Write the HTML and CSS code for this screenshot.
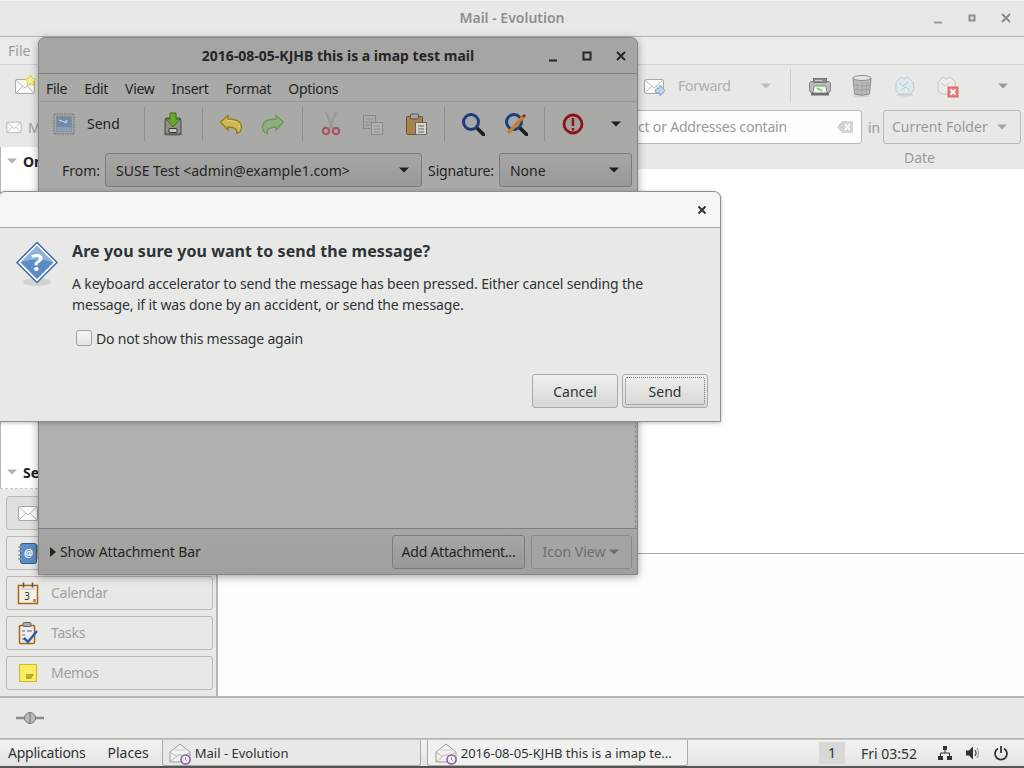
FILE: index.html
```html
<!DOCTYPE html>
<html lang="en">
<head>
<meta charset="utf-8">
<title>Mail - Evolution</title>
<link rel="stylesheet" href="styles.css">
</head>
<body>
<div class="desktop">
  <svg class="sprites" width="0" height="0" aria-hidden="true">
    <defs>
      <symbol id="arrow" viewBox="0 0 12 12"><path d="M1 3.500h10L6 8.500z"/></symbol>
      <symbol id="env" viewBox="0 0 24 24"><rect x="2.500" y="5.500" width="19" height="14" rx="1" fill="#f9f9f7" stroke="#a8a8a5"/><path d="M3 6l9 8 9-8M3 19l7-7M21 19l-7-7" fill="none" stroke="#bdbdba"/></symbol>
      <symbol id="mailclock" viewBox="0 0 24 24"><path d="M2 11L12 3l10 8v10H2z" fill="#f1f1f0" stroke="#9a9a98"/><path d="M2 21l8-7h4l8 7M2 11l7 5M22 11l-7 5" fill="none" stroke="#b5b5b3"/><path d="M6 9h12" stroke="#ccc"/><circle cx="17.500" cy="18.500" r="4.500" fill="#f3f0f5" stroke="#8d5a9e" stroke-width="1.500"/><path d="M17.500 16.500v2l1 1" fill="none" stroke="#777"/></symbol>
    </defs>
  </svg>

  <section class="window main">
    <header class="titlebar main-title">
      <span class="title-text">Mail - Evolution</span>
      <span class="wm-buttons">
        <svg width="12" height="12" viewBox="0 0 12 12"><path d="M2 10.500h8" stroke="#9b9b98" stroke-width="2"/></svg>
        <svg width="12" height="12" viewBox="0 0 12 12"><rect x="3.500" y="3.500" width="5" height="5" fill="none" stroke="#8c8c89" stroke-width="2"/></svg>
        <svg width="12" height="12" viewBox="0 0 12 12"><path d="M2 2l8 8M10 2l-8 8" stroke="#8c8c89" stroke-width="2"/></svg>
      </span>
    </header>
    <nav class="menubar main-menu"><span>File</span></nav>
    <div class="toolbar main-tools">
      <svg class="new-icon" width="24" height="24" viewBox="0 0 24 24"><use href="#env"/><path d="M17.500 1l1.900 3.500 3.800.6-2.800 2.700.7 3.800-3.600-1.800-3.600 1.800.7-3.800-2.800-2.700 3.800-.6z" fill="#faf08c" stroke="#dccd55"/></svg>
      <span class="grow"></span>
      <svg width="24" height="24" viewBox="0 0 24 24"><use href="#env"/><path d="M13 18c0-3 2-4 5-4v-3l5 5.500-5 5.500v-3c-2 0-4-.5-5-1z" fill="#bdd3ea" stroke="#82a5cc"/></svg>
      <span class="forward-label">Forward</span>
      <svg class="tool-arrow pale" width="12" height="12"><use href="#arrow"/></svg>
      <span class="vsep pale-sep"></span>
      <span class="tb-btn"><svg width="24" height="24" viewBox="0 0 24 24"><rect x="1.500" y="7.500" width="21" height="11" rx="2.500" fill="#bcbcba" stroke="#7f7f7c"/><rect x="5.500" y="4.500" width="13" height="4" fill="#8f8f8c" stroke="#777"/><path d="M7 6.500h7" stroke="#ccc"/><path d="M6 12h12l1 7H5z" fill="#eef4ea" stroke="#888"/><path d="M9 14l5 3" stroke="#8fc08a" stroke-width="1.500"/><rect x="3" y="19" width="18" height="2.500" fill="#6e6e6b"/></svg></span>
      <span class="tb-btn"><svg width="24" height="24" viewBox="0 0 24 24"><ellipse cx="12" cy="22" rx="9" ry="1.500" fill="#d3d3d1"/><path d="M3 4l1.500 16q7.500 2.500 15 0L21 4" fill="#b9b9b7" stroke="#8f8f8c"/><path d="M7 8l1 12M12 8v13M17 8l-1 12M4 11q8 2.500 16 0M4.500 15q7.500 2.500 15 0" fill="none" stroke="#969694" stroke-width=".7"/><ellipse cx="12" cy="4" rx="9" ry="2.500" fill="#e2e2e0" stroke="#8f8f8c"/></svg></span>
      <span class="tb-btn"><svg width="24" height="24" viewBox="0 0 24 24"><ellipse cx="12" cy="21" rx="9" ry="1.500" fill="#d0d0ce"/><path d="M3 8l5-5 3 2 4-2 5 5 1 7-3 5H7l-4-3z" fill="#dfeaef" stroke="#bfcbd1"/><path d="M6 9l4 3 5-4M8 16l5-3 4 4" fill="none" stroke="#b4c9d3"/></svg></span>
      <span class="tb-btn"><svg width="24" height="24" viewBox="0 0 24 24"><path d="M3 8l5-5 3 2 4-2 5 5 1 7-3 5H7l-4-3z" fill="#ececeb" stroke="#c4c4c2"/><path d="M6 9l4 3 5-4" fill="none" stroke="#c9c9c7"/><rect x="13" y="13" width="10" height="10" fill="#e57b7b" stroke="#d66"/><path d="M15.500 15.500l5 5M20.500 15.500l-5 5" stroke="#fff" stroke-width="1.800"/></svg></span>
      <svg class="tool-arrow dim" width="12" height="12"><use href="#arrow"/></svg>
    </div>
    <div class="searchbar">
      <svg class="show-env" width="18" height="18" viewBox="0 0 24 24"><use href="#env"/></svg>
      <span class="show-label">M</span>
      <span class="grow"></span>
      <div class="search-entry"><span>Subject or Addresses contain</span>
        <svg width="16" height="12" viewBox="0 0 16 12"><path d="M5 0h11v12H5L0 6z" fill="#d3d3d1"/><path d="M8 3l5 6M13 3l-5 6" stroke="#fff" stroke-width="1.500"/></svg>
      </div>
      <span class="in-label">in</span>
      <div class="scope-combo"><span>Current Folder</span><svg width="12" height="12"><use href="#arrow"/></svg></div>
    </div>
    <div class="workspace">
      <aside class="sidebar">
        <div class="tree">
          <div class="tree-row"><svg width="12" height="12"><use href="#arrow"/></svg><b>On</b></div>
          <div class="tree-row"><svg width="12" height="12"><use href="#arrow"/></svg><b>Se</b></div>
        </div>
        <div class="switcher">
          <div class="switch active"><svg width="24" height="24" viewBox="0 0 24 24"><use href="#env"/></svg></div>
          <div class="switch"><svg width="24" height="24" viewBox="0 0 24 24"><rect x="19" y="4" width="4" height="7" fill="#7ab648"/><rect x="19" y="11" width="4" height="7" fill="#e6a32e"/><rect x="4.500" y="2.500" width="16" height="20" rx="2" fill="#5b8cc6" stroke="#2f5d97"/><text x="12.500" y="16" class="at-sign">@</text><path d="M2 6h4M2 10h4M2 14h4M2 18h4" stroke="#999" stroke-width="1.500"/></svg></div>
          <div class="switch"><svg width="24" height="24" viewBox="0 0 24 24"><rect x="2.500" y="4.500" width="19" height="18" fill="#f3f0e6" stroke="#a9660e" stroke-width="1.500"/><path d="M5 8h14" stroke="#bbb"/><path d="M7.500 1.500v5M16.500 1.500v5" stroke="#555" stroke-width="1.500"/><text x="11" y="19" class="cal-num">3</text><rect x="17" y="18" width="3" height="3" fill="#999"/></svg><span>Calendar</span></div>
          <div class="switch"><svg width="24" height="24" viewBox="0 0 24 24"><rect x="3.500" y="4.500" width="15" height="18" rx="1" fill="#eee" stroke="#a9660e" stroke-width="1.500"/><rect x="7" y="1.500" width="8" height="4" rx="1" fill="#aaa" stroke="#666"/><path d="M6 10h3M6 14h3M6 18h3M11 10h5" stroke="#666"/><path d="M8 17l4 4 9-11" fill="none" stroke="#2a5da8" stroke-width="2.500"/></svg><span>Tasks</span></div>
          <div class="switch"><svg width="24" height="24" viewBox="0 0 24 24"><rect x="3.500" y="3.500" width="17" height="17" fill="#f8ee66" stroke="#cdbb1c"/><path d="M10 18v-5h8l-3 5z" fill="#bba92c"/></svg><span>Memos</span></div>
        </div>
      </aside>
      <div class="content">
        <div class="column-head"><span>Date</span></div>
        <div class="message-list"></div>
        <div class="preview"></div>
      </div>
    </div>
    <footer class="statusbar">
      <svg width="28" height="14" viewBox="0 0 28 14"><path d="M0 7h28" stroke="#8d8d8a" stroke-width="2.500"/><circle cx="14" cy="7" r="5.500" fill="#b9b9b6" stroke="#777"/><path d="M14 1.500v11" stroke="#777"/></svg>
    </footer>
  </section>

  <section class="window composer">
    <header class="titlebar comp-title">
      <span class="title-text">2016-08-05-KJHB this is a imap test mail</span>
      <span class="wm-buttons dark">
        <svg width="12" height="12" viewBox="0 0 12 12"><path d="M2 10.500h8" stroke="#262626" stroke-width="2"/></svg>
        <svg width="12" height="12" viewBox="0 0 12 12"><rect x="2.500" y="2.500" width="7" height="7" fill="none" stroke="#262626" stroke-width="2"/></svg>
        <svg width="12" height="12" viewBox="0 0 12 12"><path d="M2 2l8 8M10 2l-8 8" stroke="#262626" stroke-width="2"/></svg>
      </span>
    </header>
    <nav class="menubar comp-menu"><span>File</span><span>Edit</span><span>View</span><span>Insert</span><span>Format</span><span>Options</span></nav>
    <div class="toolbar comp-tools">
      <div class="send-btn">
        <svg width="22" height="22" viewBox="0 0 22 22"><rect x="1" y="1" width="20" height="20" fill="#a4a4a3" stroke="#6f6f6e" stroke-dasharray="1.500 1"/><rect x="3.500" y="3.500" width="15" height="15" fill="#6f8ba6" stroke="#7f8f9c"/><path d="M6 7l8 3M12 8l3 0" stroke="#d7dde2"/><rect x="3.500" y="14" width="15" height="4.500" fill="#88a0b6"/></svg>
        <span>Send</span>
      </div>
      <span class="vsep"></span>
      <span class="tb-btn"><svg width="24" height="24" viewBox="0 0 24 24"><ellipse cx="12" cy="22.500" rx="10" ry="1.500" fill="#7d7d7c"/><path d="M5 6h14l1 3v13H4V9z" fill="#8f8f8c" stroke="#444"/><rect x="8" y="16.500" width="8" height="4" rx="1" fill="#c5c5c3" stroke="#333"/><path d="M9 1h6v6h4l-7 8-7-8h4z" fill="#6aa631" stroke="#3d701a"/></svg></span>
      <span class="vsep"></span>
      <span class="tb-btn"><svg width="24" height="24" viewBox="0 0 24 24"><path d="M1.500 10L9 3.500V7c9 0 13.500 3 13.500 8.500 0 3-1.500 5-5 6 1.500-4-2-6.500-8.500-6.500v3z" fill="#cdb957" stroke="#947e14" stroke-width="1.300"/><path d="M8 8.500c8 0 12 2.500 12.500 6.500" fill="none" stroke="#ded582"/></svg></span>
      <span class="tb-btn"><svg width="24" height="24" viewBox="0 0 24 24"><path d="M22.500 10L15 3.500V7C6 7 1.500 10 1.500 15.500c0 3 1.500 5 5 6-1.500-4 2-6.500 8.500-6.500v3z" fill="#8fb07c" stroke="#6c9455" stroke-width="1.300"/></svg></span>
      <span class="vsep"></span>
      <span class="tb-btn"><svg width="24" height="24" viewBox="0 0 24 24"><path d="M7 0l6.500 16M17 0l-6.500 16" stroke="#999997" stroke-width="2.200"/><circle cx="7" cy="19" r="3.200" fill="none" stroke="#a85560" stroke-width="2.200"/><circle cx="17" cy="19" r="3.200" fill="none" stroke="#a85560" stroke-width="2.200"/></svg></span>
      <span class="tb-btn"><svg width="24" height="24" viewBox="0 0 24 24"><rect x="2.500" y="3.500" width="12" height="13" fill="#a9a9a8" stroke="#8a8a87"/><path d="M5 7h7M5 10h7M5 13h4" stroke="#8f8f8d"/><rect x="10.500" y="10.500" width="11" height="12" fill="#b2b2b1" stroke="#8a8a87"/><path d="M13 14h6M13 17h6M13 20h6" stroke="#8f8f8d"/></svg></span>
      <span class="tb-btn"><svg width="24" height="24" viewBox="0 0 24 24"><rect x="2.500" y="4.500" width="16" height="18" rx="1" fill="#a8834a" stroke="#6e5020"/><rect x="6.500" y="2" width="8" height="5" rx="1" fill="#a3a3a2" stroke="#555"/><rect x="11.500" y="10.500" width="11" height="12" fill="#d4d4d3" stroke="#666"/><path d="M14 14h6M14 17h6M14 20h6" stroke="#666"/></svg></span>
      <span class="vsep"></span>
      <span class="tb-btn"><svg width="24" height="24" viewBox="0 0 24 24"><path d="M15 15l7.500 7.500" stroke="#1f1f1f" stroke-width="3.800" stroke-linecap="round"/><circle cx="10" cy="10" r="7.500" fill="#a4a9ad" stroke="#1f3d7a" stroke-width="3"/></svg></span>
      <span class="tb-btn"><svg width="24" height="24" viewBox="0 0 24 24"><path d="M15 15l7.500 7.500" stroke="#1f1f1f" stroke-width="3.800" stroke-linecap="round"/><circle cx="10" cy="10" r="7.500" fill="#a4a9ad" stroke="#1f3d7a" stroke-width="3"/><path d="M4 21L20 4" stroke="#c9802a" stroke-width="3.500"/><path d="M19 3l2 2" stroke="#a3222b" stroke-width="3"/></svg></span>
      <span class="vsep"></span>
      <span class="tb-btn"><svg width="24" height="24" viewBox="0 0 24 24"><circle cx="12" cy="12" r="9" fill="#a5a09f" stroke="#8d1414" stroke-width="2.800"/><path d="M12 6v8M12 16v2.500" stroke="#8d1414" stroke-width="2.500"/></svg></span>
      <span class="tb-btn"><svg class="tool-arrow ink" width="12" height="12"><use href="#arrow"/></svg></span>
    </div>
    <div class="from-row">
      <label>From:</label>
      <div class="combo from-combo"><span>SUSE Test &lt;admin@example1.com&gt;</span><svg width="12" height="12"><use href="#arrow"/></svg></div>
      <label class="sig-label">Signature:</label>
      <div class="combo sig-combo"><span>None</span><svg width="12" height="12"><use href="#arrow"/></svg></div>
    </div>
    <div class="editor"></div>
    <footer class="attach-bar">
      <svg class="expander" width="6" height="10" viewBox="0 0 6 10"><path d="M0 0l6 5-6 5z"/></svg>
      <span class="attach-label">Show Attachment Bar</span>
      <button class="attach-btn add-btn">Add Attachment...</button>
      <button class="attach-btn view-btn">Icon View<svg width="12" height="12"><use href="#arrow"/></svg></button>
    </footer>
  </section>

  <section class="window dialog">
    <header class="dialog-head">
      <svg width="12" height="12" viewBox="0 0 12 12"><path d="M2.500 2.500l7 7M9.500 2.500l-7 7" stroke="#2e3436" stroke-width="2"/></svg>
    </header>
    <div class="dialog-body">
      <svg class="q-icon" width="44" height="48" viewBox="0 0 44 48"><ellipse cx="22" cy="41" rx="14" ry="4" fill="#d2d2d0"/><path d="M22 1.500l20 20-20 20-20-20z" fill="#fff" stroke="#3a6ca8" stroke-width="1.500" stroke-linejoin="round"/><path d="M22 5l16.500 16.500L22 38 5.500 21.500z" fill="#5b8cc4"/><path d="M5.500 21.500L22 5l16.500 16.500q-16.500-6-33 0z" fill="#8fb2da"/><text x="22" y="30" class="q-mark">?</text></svg>
      <div class="dialog-text">
        <h1>Are you sure you want to send the message?</h1>
        <p>A keyboard accelerator to send the message has been pressed. Either cancel sending the message, if it was done by an accident, or send the message.</p>
        <label class="check-row"><span class="checkbox"></span>Do not show this message again</label>
      </div>
    </div>
    <div class="dialog-actions">
      <button class="dlg-btn">Cancel</button>
      <button class="dlg-btn default"><span>Send</span></button>
    </div>
  </section>

  <footer class="panel">
    <span class="panel-menu apps">Applications</span>
    <span class="panel-menu">Places</span>
    <div class="task task-main"><svg width="24" height="24" viewBox="0 0 24 24"><use href="#mailclock"/></svg><span>Mail - Evolution</span></div>
    <div class="task task-comp"><svg width="24" height="24" viewBox="0 0 24 24"><use href="#mailclock"/></svg><span>2016-08-05-KJHB this is a imap te...</span></div>
    <span class="grow"></span>
    <span class="workspace-num">1</span>
    <span class="clock">Fri 03:52</span>
    <span class="tray">
      <svg width="16" height="16" viewBox="0 0 16 16"><path d="M6 1h4v4H6zM1 11h5v4H1zM10 11h5v4h-5z" fill="#2e3436"/><path d="M8 5v3M3.500 11V8h9v3" fill="none" stroke="#2e3436"/></svg>
      <svg width="16" height="16" viewBox="0 0 16 16"><path d="M1 5.500h3l4-4v13l-4-4H1z" fill="#2e3436"/><path d="M10 5q2 3 0 6" fill="none" stroke="#555" stroke-width="1.300"/><path d="M12 3q3 5 0 10" fill="none" stroke="#aaa" stroke-width="1.300"/></svg>
      <svg width="16" height="16" viewBox="0 0 16 16"><path d="M5 3.500a6 6 0 1 0 6 0" fill="none" stroke="#2e3436" stroke-width="1.800"/><path d="M8 1v7" stroke="#2e3436" stroke-width="1.800"/></svg>
    </span>
  </footer>
</div>
</body>
</html>
```
FILE: styles.css
```css
* { box-sizing: border-box; }
html, body { margin: 0; padding: 0; }
body { font-family: "Noto Sans", "Open Sans", sans-serif; font-size: 14px; color: #2e3436; }
.sprites { position: absolute; }
svg { flex: none; display: block; }
.desktop { position: relative; width: 1024px; height: 768px; overflow: hidden; background: #e8e8e7; }
.grow { flex: 1; }

.window { position: absolute; display: flex; flex-direction: column; }
.main { left: 0; top: 0; width: 1024px; height: 739px; background: #e8e8e7; color: #9a9a98; }
.titlebar { position: relative; display: flex; align-items: center; justify-content: center; flex: none; }
.title-text { font-weight: 700; }
.wm-buttons { position: absolute; right: 0; top: 0; bottom: 0; display: flex; align-items: center; }
.main-title { height: 37px; padding-bottom: 2px; box-shadow: inset 0 1px 0 #f4f4f3; border-bottom: 1px solid #b5b5b2; background: #e8e8e7; }
.main-title .title-text { color: #8f8f8d; font-weight: 600; }
.main-title .wm-buttons { gap: 22px; right: 12px; }

.menubar { display: flex; flex: none; align-items: center; }
.main-menu { height: 28px; padding-left: 8px; border-bottom: 1px solid #cfcfcd; background: #ebebea; }
.toolbar { display: flex; align-items: center; flex: none; }
.main-tools { height: 37px; padding: 4px 15.500px 0 13px; }
.tb-btn { width: 42.500px; flex: none; display: flex; justify-content: center; align-items: center; }
.forward-label { margin: 0 29px 0 12px; letter-spacing: -.3px; color: #b0b0ae; }
.tool-arrow { fill: #a9a9a7; }
.tool-arrow.dim { fill: #9a9a98; margin-left: 28px; }
.tool-arrow.ink { fill: #1e1e1e; }
.tool-arrow.pale { fill: #bdbdbb; }
.vsep { width: 1px; height: 34px; background: #8f8f8c; margin: 0 7px; flex: none; }
.pale-sep { background: #cdcdcb; margin: 0 8px 0 18px; }
.searchbar { display: flex; align-items: center; flex: none; height: 45px; padding: 5px 3px 0 5px; }
.show-label { margin-left: 5px; }
.search-entry { display: flex; align-items: center; justify-content: flex-end; width: 300px; height: 34px; padding: 0 8px 1px 10px; background: #fdfdfd; border: 1px solid #b9b9b7; border-radius: 3px; white-space: nowrap; color: #9a9a98; margin-right: 6px; letter-spacing: -.2px; }
.search-entry span { margin-right: 50px; }
.in-label { width: 15px; }
.scope-combo { display: flex; align-items: center; justify-content: space-between; width: 138px; height: 34px; padding: 0 12px 1px 8px; border: 1px solid #b9b9b7; border-radius: 3px; fill: #a5a5a3; }
.workspace { flex: 1; display: flex; min-height: 0; }
.sidebar { width: 218px; display: flex; flex-direction: column; border-right: 2px solid #b5b5b2; flex: none; }
.tree { height: 342px; flex: none; background: #fff; border-left: 1px solid #b5b5b2; display: flex; flex-direction: column; justify-content: space-between; padding: 4px 0 6px 5px; border-bottom: 1px dashed #c9c9c7; color: #222; }
.tree-row { display: flex; align-items: center; gap: 5px; fill: #b0b0ae; height: 20px; }
.switcher { flex: 1; display: flex; flex-direction: column; gap: 6px; padding: 7px 3px 6px 6px; }
.switch { display: flex; align-items: center; gap: 11px; height: 34px; padding: 0 0 1px 9px; border: 1px solid #b9b9b7; border-radius: 3px; color: #a0a09e; letter-spacing: -.25px; flex: none; }
.switch.active { background: #dfdfdd; }
.cal-num { font: 10px "Noto Sans", sans-serif; text-anchor: middle; fill: #333; letter-spacing: 0; }
.at-sign { font: 700 10px "Noto Sans", sans-serif; text-anchor: middle; fill: #fff; letter-spacing: 0; }
.content { flex: 1; display: flex; flex-direction: column; min-width: 0; }
.column-head { height: 22px; display: flex; justify-content: flex-end; padding-right: 89px; line-height: 21px; flex: none; }
.message-list { height: 385px; background: #fff; border-bottom: 1px solid #a9a9a7; flex: none; }
.preview { flex: 1; background: #fdfdfd; }
.statusbar { height: 43px; flex: none; border-top: 2px solid #b5b5b2; border-bottom: 1px solid #b5b5b2; display: flex; align-items: center; padding-left: 16px; }

.composer { left: 38px; top: 37px; width: 600px; height: 538px; background: #a9a9a8; border: 1px solid #858583; border-radius: 7px 7px 0 0; box-shadow: 0 2px 8px rgba(0,0,0,.35); color: #252525; }
.comp-title { height: 36px; border-bottom: 1px solid #7d7d7b; background: #a5a5a4; border-radius: 7px 7px 0 0; }
.comp-title .wm-buttons { right: 10px; gap: 22px; }
.comp-menu { height: 28px; padding: 1px 0 0 7px; gap: 17px; border-bottom: 1px solid #979796; letter-spacing: -.3px; }
.comp-tools { height: 43px; }
.send-btn { display: flex; align-items: center; gap: 12px; width: 98px; padding-left: 14px; flex: none; }
.from-row { display: flex; align-items: center; flex: none; height: 50px; padding: 0 5px 0 23px; gap: 5px; }
.sig-label { margin-left: 1px; letter-spacing: -.15px; }
.combo { display: flex; align-items: center; justify-content: space-between; height: 34px; padding: 0 11px 0 10px; border: 1px solid #7b7b79; border-radius: 3px; background: linear-gradient(#a6a6a5, #999998); fill: #1e1e1e; white-space: nowrap; }
.from-combo { width: 317px; }
.sig-combo { width: 133px; }
.editor { flex: 1; background: #afafae; border-right: 1px dashed #8a8a88; margin-right: 1px; }
.attach-bar { height: 46px; flex: none; border-top: 1px solid #7d7d7b; background: linear-gradient(#a6a6a5, #9f9f9e); display: flex; align-items: center; padding: 0 5px 0 11px; }
.expander { fill: #222; margin-right: 4px; }
.attach-label { flex: 1; letter-spacing: -.1px; }
button { font: inherit; color: inherit; }
.attach-btn { height: 34px; padding: 0; border: 1px solid #7b7b79; border-radius: 3px; background: linear-gradient(#a6a6a5, #989897); white-space: nowrap; }
.add-btn { width: 133px; margin-right: 6px; letter-spacing: -.25px; }
.view-btn { display: flex; align-items: center; justify-content: center; gap: 3px; color: #6e6e6d; fill: #6e6e6d; background: #a4a4a3; border-color: #8a8a88; width: 101px; }

.dialog { left: -2px; top: 191px; width: 723px; height: 231px; background: #e8e8e7; border: 1px solid #8e8e8c; border-radius: 7px 7px 0 0; box-shadow: 0 1px 4px rgba(0,0,0,.25); }
.dialog-head { height: 36px; flex: none; display: flex; align-items: center; justify-content: flex-end; padding-right: 12px; background: #f5f5f4; border-bottom: 1px solid #a9a9a7; border-radius: 7px 7px 0 0; }
.dialog-body { flex: 1; display: flex; gap: 13px; padding: 12px 16px 0 16px; }
.q-icon { margin-top: 1px; }
.dialog-text { flex: 1; }
.dialog-text h1 { margin: 0 0 11px; font-size: 16px; font-weight: 700; line-height: 22px; letter-spacing: .07px; }
.dialog-text p { margin: 0; line-height: 21px; letter-spacing: -.14px; }
.check-row { display: flex; align-items: center; gap: 4px; margin: 13px 0 0 4px; height: 20px; letter-spacing: -.2px; }
.checkbox { width: 16px; height: 16px; border: 1px solid #a0a09e; border-radius: 3px; background: linear-gradient(#f8f8f7, #e2e2e0); }
.dialog-actions { flex: none; display: flex; justify-content: flex-end; gap: 4px; padding: 0 12px 13px 0; }
.dlg-btn { width: 86px; height: 34px; border: 1px solid #a9a9a7; border-radius: 3px; background: linear-gradient(#efefee, #d6d6d4); padding: 2px; }
.dlg-btn.default span { display: flex; align-items: center; justify-content: center; height: 100%; border: 1px dotted #777; border-radius: 2px; }

.panel { position: absolute; left: 0; right: 0; top: 739px; height: 29px; display: flex; align-items: center; background: linear-gradient(#f2f2f1, #e4e4e2); border-top: 1px solid #c2c2c0; border-bottom: 2px solid #555; }
.panel-menu { margin: 0 14px 2px 0; flex: none; }
.apps { margin-left: 8px; margin-right: 22px; letter-spacing: -.25px; }
.task { display: flex; align-items: center; gap: 3px; height: 26px; align-self: flex-start; background: #f0f0ef; border: 1px solid #a9a9a7; border-top: 0; border-radius: 0 0 3px 3px; white-space: nowrap; padding: 1px 0 0 5px; font-size: 13px; flex: none; }
.task-main { width: 259px; margin-left: -1px; background: #e8e8e7; }
.task-comp { width: 261px; margin-left: 6px; padding-left: 6px; }
.workspace-num { width: 26px; height: 22px; background: #d8d8d6; text-align: center; line-height: 22px; margin-right: 16px; }
.clock { margin-right: 20px; }
.tray { display: flex; gap: 12px; margin-right: 15px; }
.q-mark { font: 700 24px "Noto Sans", sans-serif; text-anchor: middle; fill: #fff; }
```
